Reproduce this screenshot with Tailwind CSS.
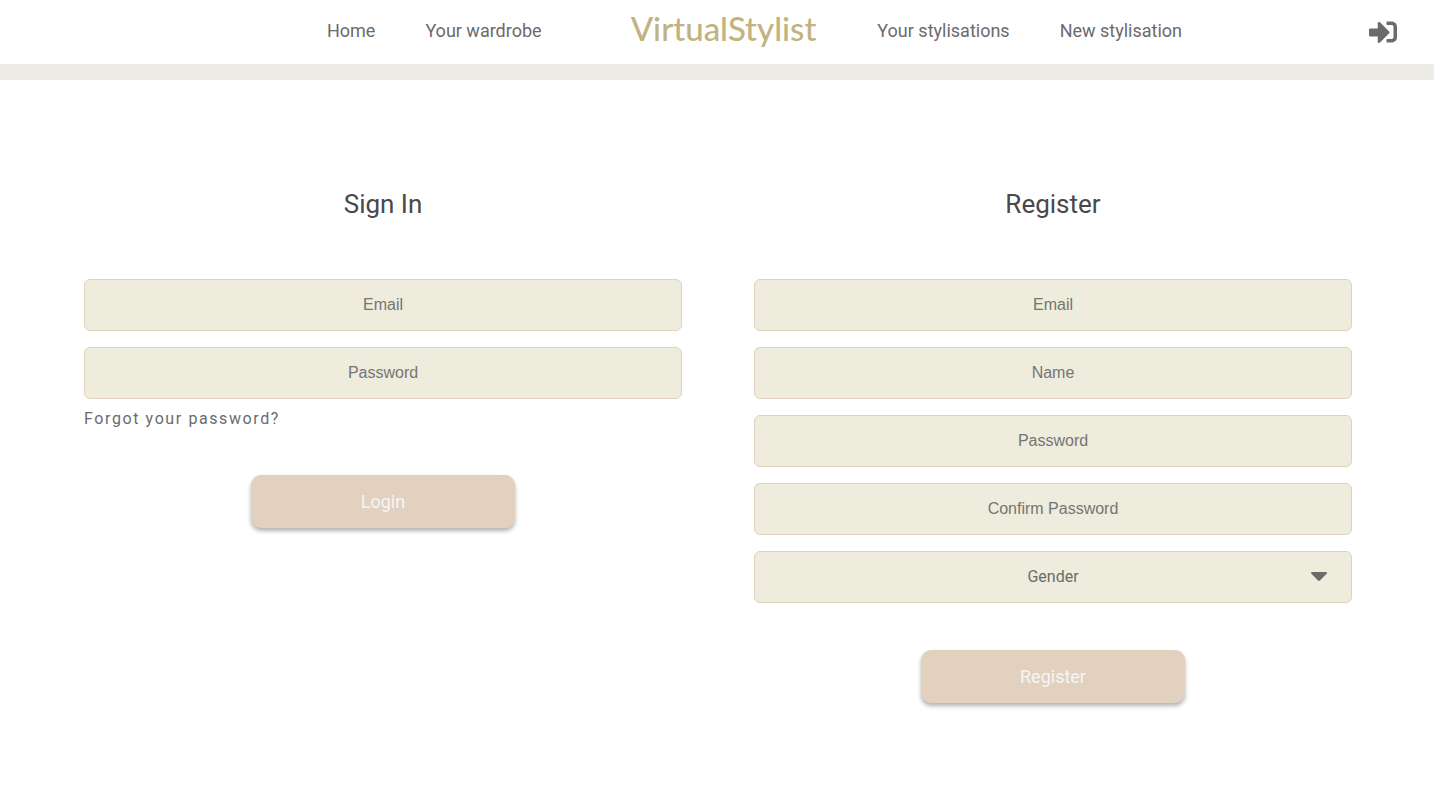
<!DOCTYPE html>
<html lang="en">
<head>
<meta charset="utf-8">
<meta name="viewport" content="width=device-width, initial-scale=1">
<title>VirtualStylist</title>
<script src="https://cdn.jsdelivr.net/npm/@tailwindcss/browser@4"></script>
</head>
<body class="min-h-screen bg-white font-['Roboto',sans-serif] text-[#6b6b6b]">
<header class="flex h-20 items-center border-b-16 border-[#edece6] pr-[37px] pl-35 text-lg">
  <nav class="flex flex-1 items-center justify-center" aria-label="Main">
    <div class="mb-0.5 flex gap-[50px]">
      <a href="#">Home</a>
      <a href="#">Your wardrobe</a>
    </div>
    <a href="#" class="mr-[61px] mb-2 ml-[89px] font-['Lato',sans-serif] text-[33px] leading-10 font-medium text-[#c2b280]">VirtualStylist</a>
    <div class="mb-0.5 flex gap-[50px]">
      <a href="#">Your stylisations</a>
      <a href="#">New stylisation</a>
    </div>
  </nav>
  <a href="#" aria-label="Sign in">
    <svg class="size-7" viewBox="0 0 512 512" fill="currentColor" aria-hidden="true"><path d="M416 448h-84c-6.6 0-12-5.4-12-12v-40c0-6.6 5.4-12 12-12h84c17.700 0 32-14.300 32-32V160c0-17.700-14.300-32-32-32h-84c-6.600 0-12-5.400-12-12V76c0-6.600 5.400-12 12-12h84c53 0 96 43 96 96v192c0 53-43 96-96 96zm-47-201L201 79c-15-15-41-4.500-41 17v96H24c-13.300 0-24 10.700-24 24v96c0 13.300 10.700 24 24 24h136v96c0 21.500 26 32 41 17l168-168c9.300-9.400 9.300-24.600 0-34z"/></svg>
  </a>
</header>
<main class="grid grid-cols-2 gap-[72px] pt-[104px] pr-[82px] pb-20 pl-[84px]">
  <form class="flex flex-col">
    <h2 class="mb-[55px] text-center text-[26px] leading-10 text-[#4a4848]">Sign In</h2>
    <div class="flex flex-col gap-4">
      <input type="email" placeholder="Email" aria-label="Email" class="h-13 w-full rounded-md border border-[#e2d1bf] bg-[#eeecdc] text-center font-['Liberation_Sans',sans-serif] text-base placeholder:text-[#757575]">
      <input type="password" placeholder="Password" aria-label="Password" class="h-13 w-full rounded-md border border-[#e2d1bf] bg-[#eeecdc] text-center font-['Liberation_Sans',sans-serif] text-base placeholder:text-[#757575]">
    </div>
    <a href="#" class="mt-2 self-start text-base tracking-widest">Forgot your password?</a>
    <button type="button" class="mt-11 h-[53px] w-66 self-center rounded-[10px] bg-[#e2d1bf] text-lg text-[#f5f5f5] shadow-[0_3px_4px_rgba(0,0,0,0.3)]">Login</button>
  </form>
  <form class="flex flex-col">
    <h2 class="mb-[55px] text-center text-[26px] leading-10 text-[#4a4848]">Register</h2>
    <div class="flex flex-col gap-4">
      <input type="email" placeholder="Email" aria-label="Email" class="h-13 w-full rounded-md border border-[#e2d1bf] bg-[#eeecdc] text-center font-['Liberation_Sans',sans-serif] text-base placeholder:text-[#757575]">
      <input type="text" placeholder="Name" aria-label="Name" class="h-13 w-full rounded-md border border-[#e2d1bf] bg-[#eeecdc] text-center font-['Liberation_Sans',sans-serif] text-base placeholder:text-[#757575]">
      <input type="password" placeholder="Password" aria-label="Password" class="h-13 w-full rounded-md border border-[#e2d1bf] bg-[#eeecdc] text-center font-['Liberation_Sans',sans-serif] text-base placeholder:text-[#757575]">
      <input type="password" placeholder="Confirm Password" aria-label="Confirm Password" class="h-13 w-full rounded-md border border-[#e2d1bf] bg-[#eeecdc] text-center font-['Liberation_Sans',sans-serif] text-base placeholder:text-[#757575]">
      <div class="relative">
        <select aria-label="Gender" class="block h-13 w-full appearance-none rounded-md border border-[#e2d1bf] bg-[#eeecdc] text-center text-base [text-align-last:center]">
          <option>Gender</option>
          <option>Female</option>
          <option>Male</option>
        </select>
        <svg class="pointer-events-none absolute top-[21px] right-[25px] h-[9px] w-4" viewBox="0 0 16 9" fill="currentColor" aria-hidden="true"><path d="M1 0h14c1 0 1.300 1.100.6 1.800L9 8.400c-.6.600-1.400.600-2 0L.4 1.800C-.3 1.100 0 0 1 0z"/></svg>
      </div>
    </div>
    <button type="button" class="mt-[47px] h-[53px] w-66 self-center rounded-[10px] bg-[#e2d1bf] text-lg text-[#f5f5f5] shadow-[0_3px_4px_rgba(0,0,0,0.3)]">Register</button>
  </form>
</main>
</body>
</html>
